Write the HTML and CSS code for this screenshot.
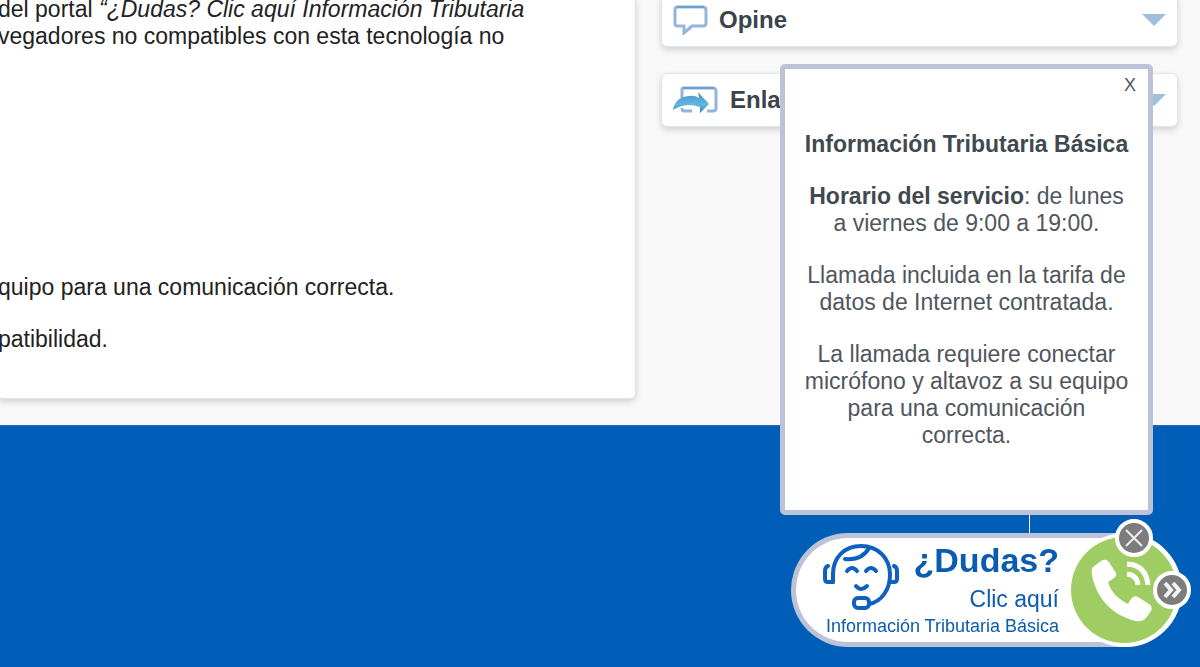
FILE: index.html
```html
<!DOCTYPE html>
<html lang="es">
<head>
<meta charset="utf-8">
<title>Información Tributaria Básica</title>
<link rel="stylesheet" href="styles.css">
</head>
<body>
<main class="content">
  <article class="card article">
    <p class="intro">del portal <em>“¿Dudas? Clic aquí Información Tributaria</em><br>vegadores no compatibles con esta tecnología no</p>
    <p>quipo para una comunicación correcta.</p>
    <p>patibilidad.</p>
  </article>
  <aside class="sidebar">
    <button class="card panel" type="button">
      <svg width="35" height="30" viewBox="0 0 35 30" aria-hidden="true"><path d="M4 2H30Q33 2 33 5V18Q33 21 30 21H19L11 28V21H4Q2 21 2 18V5Q2 2 4 2Z" fill="#fff" stroke="#93b4dc" stroke-width="3"/><path d="M4 2H31" stroke="#6f9cd0" stroke-width="2"/></svg>
      <span class="panel-title">Opine</span>
      <svg class="arrow" width="24" height="12" viewBox="0 0 24 12" aria-hidden="true"><path d="M0 0H24L12 12Z" fill="#9fc0dd"/></svg>
    </button>
    <button class="card panel" type="button">
      <svg width="46" height="28" viewBox="0 0 46 28" aria-hidden="true">
        <defs><linearGradient id="g" x1="0" y1="0" x2="0" y2="1"><stop offset="0" stop-color="#4b93ca"/><stop offset=".6" stop-color="#62b6df"/><stop offset="1" stop-color="#3b81ae"/></linearGradient></defs>
        <path d="M9 12V3Q9 2 11 2H40Q43 2 43 5V22Q43 25 40 25H34M19 25H11Q9 25 9 22" fill="none" stroke="#93b4dc" stroke-width="3"/>
        <path d="M10 2H41" stroke="#6f9cd0" stroke-width="2"/>
        <path d="M0 24Q2 11 16 10Q22 9 26 12L25 6L36 18L27 27V21Q13 16 0 24Z" fill="url(#g)"/>
      </svg>
      <span class="panel-title">Enlaces</span>
      <svg class="arrow" width="24" height="12" viewBox="0 0 24 12" aria-hidden="true"><path d="M0 0H24L12 12Z" fill="#9fc0dd"/></svg>
    </button>
  </aside>
</main>
<footer class="footer"></footer>

<section class="assistant" aria-label="Asistencia">
  <div class="popup" role="dialog" aria-labelledby="popup-title">
    <button class="close" type="button" aria-label="Cerrar">X</button>
    <h2 id="popup-title">Información Tributaria Básica</h2>
    <p><strong>Horario del servicio</strong>: de lunes a viernes de 9:00 a 19:00.</p>
    <p>Llamada incluida en la tarifa de datos de Internet contratada.</p>
    <p>La llamada requiere conectar micrófono y altavoz a su equipo para una comunicación correcta.</p>
  </div>
  <div class="connector"></div>
  <div class="widget">
    <button class="call" type="button">
      <span class="label">
        <span class="row">
          <svg class="agent" width="77" height="68" viewBox="0 0 77 68" fill="none" stroke="#0f60bf" stroke-width="4" stroke-linecap="round" stroke-linejoin="round" aria-hidden="true">
            <path d="M10 39V31C10 14 22 3 38 3C55 3 67 15 67 32C67 47 58 59 46 61"/>
            <path d="M46 5C41 14 33 17 22 16"/>
            <path d="M10 39H5Q2 39 2 36V28Q2 24 5 23"/>
            <path d="M67 39H71Q74 39 74 36V28Q74 24 71 23"/>
            <path d="M24 28Q29 22 34 28M43 28Q48 22 53 28"/>
            <path d="M33 43Q38 49 44 43"/>
            <rect x="31" y="55" width="15" height="10" rx="4"/>
          </svg>
          <span class="question">¿Dudas?</span>
        </span>
        <span class="click">Clic aquí</span>
        <span class="topic">Información Tributaria Básica</span>
      </span>
      <svg class="phone" width="114" height="114" viewBox="0 0 114 114" aria-hidden="true">
        <circle cx="57" cy="57" r="57" fill="#fff"/>
        <circle cx="56" cy="57" r="53" fill="#a0cd63"/>
        <path d="M25 34L33 28Q38 25 41 29L48 40Q49 43 46 45L40 49C43 59 50 66 60 71L63 66Q66 62 70 64L81 71Q85 74 83 78L78 85Q74 89 68 88C45 83 28 65 24 42Q23 36 25 34Z" fill="#fff"/>
        <path d="M59 31Q78 32 80 52M59 41Q69 42 70 52" fill="none" stroke="#fff" stroke-width="5"/>
      </svg>
    </button>
    <button class="mini mini-close" type="button" aria-label="Cerrar asistente"><svg width="38" height="38" viewBox="0 0 38 38" fill="none" aria-hidden="true"><circle cx="19" cy="19" r="17" fill="#7c7c7c" stroke="#fff" stroke-width="4"/><path d="M11 11L27 27M27 11L11 27" stroke="#eee" stroke-width="2"/></svg></button>
    <button class="mini mini-hide" type="button" aria-label="Ocultar asistente"><svg width="38" height="38" viewBox="0 0 38 38" fill="none" aria-hidden="true"><circle cx="19" cy="19" r="17" fill="#7c7c7c" stroke="#fff" stroke-width="4"/><path d="M12 12L18 19L12 26M20 12L26 19L20 26" stroke="#f2f2f2" stroke-width="4"/></svg></button>
  </div>
</section>
</body>
</html>
```
FILE: styles.css
```css
* { box-sizing: border-box; }

body {
  display: flex;
  flex-direction: column;
  min-height: 100vh;
  margin: 0;
  overflow: hidden;
  background: #f8f8f8;
  color: #222;
  font-family: "Liberation Sans", Arial, sans-serif;
  font-size: 23px;
  line-height: 27px;
}

button {
  border: 0;
  padding: 0;
  background: none;
  color: inherit;
  font: inherit;
  cursor: pointer;
}

p, h2 { margin: 0; }

svg { display: block; flex: none; }

.content {
  display: grid;
  grid-template-columns: 636fr 517fr;
  align-items: start;
  gap: 25px;
  padding: 0 22px 26px 0;
}

.card {
  border: 1px solid #dde5ee;
  border-radius: 6px;
  background: #fff;
  box-shadow: 0 3px 6px #00000026;
}

.article {
  display: flex;
  flex-direction: column;
  gap: 25px;
  margin: -5px 0 0 -3px;
  padding-bottom: 45px;
  white-space: nowrap;
}

.intro { padding-bottom: 199px; }

.sidebar {
  display: flex;
  flex-direction: column;
  gap: 26px;
  margin-top: -7px;
}

.panel {
  display: flex;
  align-items: center;
  gap: 11px;
  min-height: 54px;
  padding: 0 11px;
  color: #3b434b;
  font-size: 24px;
  font-weight: bold;
}

.panel-title { padding-bottom: 2px; }

.arrow { margin-left: auto; }

.footer {
  flex: 1;
  border-top: 1px solid #2b69ab;
  background: #005eb8;
}

.assistant {
  position: fixed;
  right: 18px;
  bottom: 20px;
  display: flex;
  flex-direction: column;
  align-items: flex-end;
}

.popup {
  display: flex;
  flex-direction: column;
  gap: 25px;
  width: 373px;
  margin-right: 29px;
  padding: 3px 19px 61px;
  border: 5px solid #bcc3d6;
  border-radius: 5px;
  background: #fff;
  color: #50565d;
  text-align: center;
}

.popup h2, .popup strong {
  color: #414950;
  font-size: 23px;
  font-weight: bold;
}

.close {
  align-self: flex-end;
  margin: 0 -9px 7px 0;
  padding: 0 2px;
  font-size: 18px;
}

.connector {
  width: 1px;
  height: 18px;
  margin-right: 152px;
  background: #fff;
}

.widget { position: relative; }

.call {
  display: flex;
  align-items: center;
  gap: 9px;
  height: 114px;
  padding-left: 27px;
  border: 5px solid #bcc3d6;
  border-right: 0;
  border-radius: 57px;
  background: #fff;
  color: #0b5cb0;
}

.label {
  display: flex;
  flex-direction: column;
  align-items: flex-end;
  min-width: 236px;
}

.row {
  display: flex;
  align-self: stretch;
  justify-content: space-between;
  height: 46px;
}

.agent { margin-top: 3px; }

.question {
  font-size: 34px;
  font-weight: bold;
  line-height: 40px;
}

.topic { font-size: 18px; }

.mini { position: absolute; }

.mini-close { top: -14px; right: 29px; }

.mini-hide { top: 38px; right: -9px; }
```
